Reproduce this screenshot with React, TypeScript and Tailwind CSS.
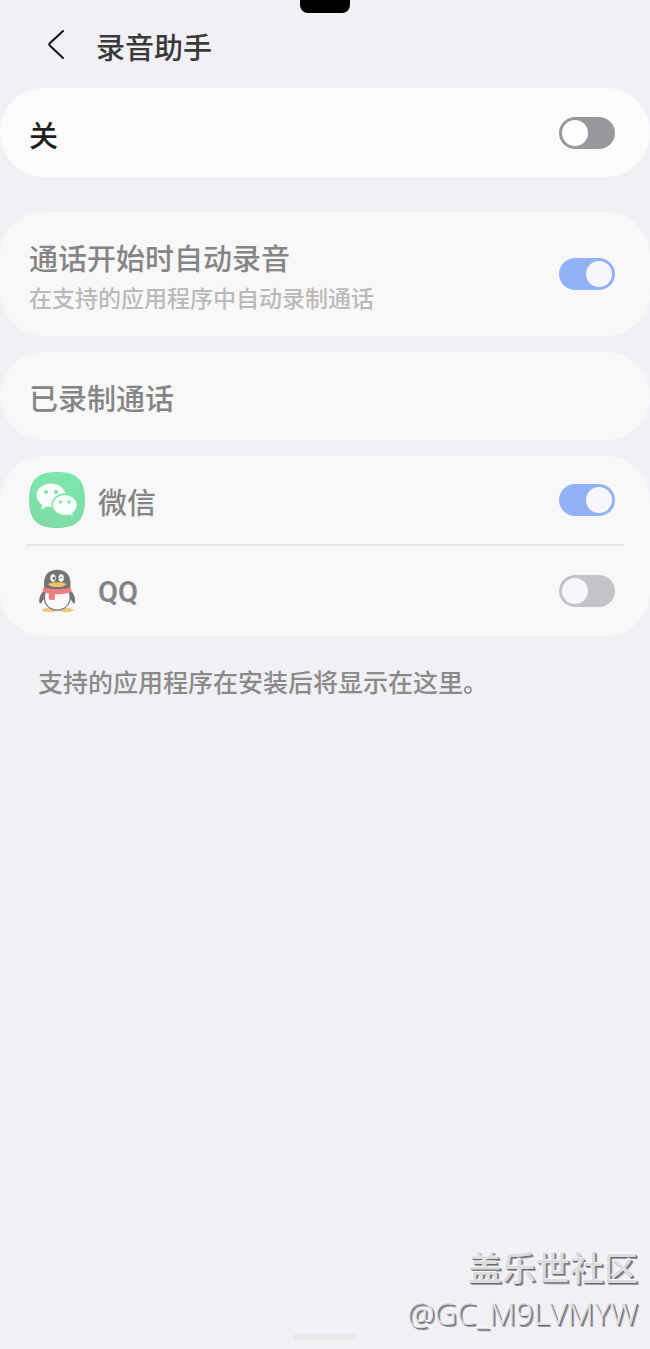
import React, { FC, ReactNode, useState } from 'react';

type SwitchProps = {
  id: string;
  checked: boolean;
  onChange: (value: boolean) => void;
  dimmed?: boolean;
};

const Switch: FC<SwitchProps> = ({ id, checked, onChange, dimmed }) => (
  <input
    id={id}
    type="checkbox"
    role="switch"
    checked={checked}
    onChange={(e) => onChange(e.target.checked)}
    className={`h-8 w-14 shrink-0 cursor-pointer appearance-none rounded-full p-[3px] before:block before:size-[26px] before:rounded-full before:content-[''] checked:bg-[#92b2f7] checked:before:ml-6 ${
      dimmed
        ? 'bg-[#c4c3c9] before:bg-[#f6f6fb]'
        : 'bg-[#98979c] before:bg-[#fdfdff]'
    }`}
  />
);

const Card: FC<{ children: ReactNode; className?: string }> = ({
  children,
  className = 'bg-[#f8f8f8]',
}) => <section className={`rounded-[44px] ${className}`}>{children}</section>;

const WeChatIcon = () => (
  <svg viewBox="0 0 56 56" className="size-14 shrink-0" aria-hidden="true">
    <defs>
      <linearGradient id="wechat-bg" x1="0" y1="0" x2="0" y2="1">
        <stop offset="0" stopColor="#7be8ac" />
        <stop offset="1" stopColor="#80dba6" />
      </linearGradient>
    </defs>
    <path
      d="M28 0C48 0 56 8 56 28S48 56 28 56 0 48 0 28 8 0 28 0Z"
      fill="url(#wechat-bg)"
    />
    <path
      d="M22 11.500c8 0 14.500 5.200 14.500 11.700S30 35 22 35c-1.500 0-3-.2-4.300-.5L12.700 37.500l.2-5C9.600 30.400 7.500 27 7.500 23.200c0-6.500 6.500-11.700 14.500-11.700Z"
      fill="#f8fdfa"
    />
    <path
      d="M35.800 22.300c7 0 12.600 4.800 12.600 10.700 0 3.300-1.700 6.200-4.500 8.200l.9 4.200-4.500-2.300c-1.400.5-2.900.7-4.500.7-7 0-12.600-4.800-12.600-10.800s5.600-10.700 12.600-10.700Z"
      fill="#f8fdfa"
      stroke="#7be2a9"
      strokeWidth="1.400"
    />
    <g fill="#7be2a9">
      <circle cx="17" cy="20" r="2" />
      <circle cx="27" cy="20" r="2" />
      <circle cx="31.500" cy="30" r="1.700" />
      <circle cx="40" cy="30" r="1.700" />
    </g>
  </svg>
);

const QQIcon = () => (
  <svg viewBox="0 0 56 56" className="size-14 shrink-0" aria-hidden="true">
    <ellipse cx="20" cy="47" rx="7.500" ry="2.200" fill="#ecca81" />
    <ellipse cx="37" cy="47" rx="7.500" ry="2.200" fill="#ecca81" />
    <g fill="#747474">
      <path d="M15.500 27C12 30 10 34 10.200 38.500c.2 2.500 1.300 2.500 2.300 1l4-6Z" />
      <path d="M41 27c3.500 3 5.300 7 5.100 11.500-.2 2.500-1.300 2.500-2.300 1l-4-6Z" />
      <ellipse cx="28.200" cy="34.500" rx="13.500" ry="13.200" />
      <path d="M15.500 28l-.5-7C15 11.500 20 6.800 28.200 6.800S41.500 11.500 41.500 21l-.5 7Z" />
    </g>
    <path
      d="M17.700 28h21c1.200 1.800 1.800 4 1.800 6.500 0 7-5 12-12.200 12S16 41.500 16 34.500c0-2.500.6-4.700 1.700-6.500Z"
      fill="#fafafa"
    />
    <path
      d="M14.500 24.500c8.500 2.300 19 2.300 27.300 0l.7 4.200c-5.300 2-10.800 2.700-16.700 2.500v5.600c-2 .4-4.200.2-6-.3v-6c-2.200-.4-4.300-1.100-6-2Z"
      fill="#ee7d80"
    />
    <ellipse cx="24" cy="15" rx="2.700" ry="3.700" fill="#fafafa" />
    <ellipse cx="32.200" cy="15" rx="2.700" ry="3.700" fill="#fafafa" />
    <ellipse cx="24.900" cy="15.200" rx="1.100" ry="1.700" fill="#666" />
    <path
      d="M30.700 15.600c.4-1.900 2.600-1.900 3.200 0"
      fill="none"
      stroke="#777"
      strokeWidth="1"
    />
    <path
      d="M19 21.200c3-2.600 15.400-2.600 18.400 0-3 3.800-15.400 3.800-18.400 0Z"
      fill="#edc36a"
    />
  </svg>
);

const App: FC = () => {
  const [enabled, setEnabled] = useState(false);
  const [autoRecord, setAutoRecord] = useState(true);
  const [wechat, setWechat] = useState(true);
  const [qq, setQQ] = useState(false);

  return (
    <div className="flex min-h-screen flex-col bg-[#f1f0f5] font-[Roboto,'Noto_Sans_CJK_SC',sans-serif] text-[29px] leading-10 font-medium text-[#858585]">
      <div className="mx-auto h-[13px] w-[50px] rounded-b-lg bg-black" />
      <header className="flex h-[75px] items-start gap-6 pt-3 pl-10 text-[#3a3a3a]">
        <button
          type="button"
          aria-label="返回"
          className="flex h-10 w-8 items-center justify-center"
        >
          <svg
            viewBox="0 0 32 40"
            className="h-10 w-8"
            fill="none"
            stroke="#111"
            strokeWidth="2"
            strokeLinecap="round"
            strokeLinejoin="round"
          >
            <path d="M23 6 9.800 18.300a1.500 1.500 0 0 0 0 2.200L23 33" />
          </svg>
        </button>
        <h1 className="pt-1">录音助手</h1>
      </header>

      <main>
        <Card className="mb-[35px] bg-[#fbfbfb]">
          <div className="flex h-[89px] items-center justify-between pr-[35px] pl-[29px]">
            <label htmlFor="enabled" className="pt-2 text-[#1f1f1f]">
              关
            </label>
            <Switch id="enabled" checked={enabled} onChange={setEnabled} />
          </div>
        </Card>

        <Card className="mb-4 bg-[#f8f8f8]">
          <div className="flex h-[124px] items-center justify-between pr-[35px] pl-[29px]">
            <label htmlFor="auto-record" className="pt-3">
              <span className="block">通话开始时自动录音</span>
              <span className="block text-[23px] text-[#bababa]">
                在支持的应用程序中自动录制通话
              </span>
            </label>
            <Switch
              id="auto-record"
              checked={autoRecord}
              onChange={setAutoRecord}
              dimmed
            />
          </div>
        </Card>

        <Card className="mb-4 bg-[#f8f8f8]">
          <button
            type="button"
            className="flex h-[88px] w-full items-center pt-2 pl-[29px] text-left"
          >
            已录制通话
          </button>
        </Card>

        <Card>
          <div className="flex h-[88px] items-center pr-[35px] pl-[29px]">
            <WeChatIcon />
            <label htmlFor="wechat" className="grow pt-2 pl-[13px]">
              微信
            </label>
            <Switch
              id="wechat"
              checked={wechat}
              onChange={setWechat}
              dimmed
            />
          </div>
          <hr className="mx-[26px] border-t-2 border-[#e9e9e9]" />
          <div className="flex h-[90px] items-center pr-[35px] pl-[29px]">
            <QQIcon />
            <label htmlFor="qq" className="grow pt-0.5 pl-[13px] font-semibold">
              QQ
            </label>
            <Switch id="qq" checked={qq} onChange={setQQ} dimmed />
          </div>
        </Card>

        <p className="px-[38px] pt-7 text-[25px] text-[#8a8a8a]">
          支持的应用程序在安装后将显示在这里。
        </p>
      </main>

      <footer className="mt-auto">
        <div className="pr-3 text-right text-[#dcdcdf] [text-shadow:-1px_-1px_0_#f8f8fa,1px_1px_0_#6c6c70,2px_2px_0_#9a9a9e]">
          <p className="text-[34px] leading-[46px]">盖乐世社区</p>
          <p className="font-['Open_Sans',sans-serif] text-[31px] leading-[42px] font-light">
            @GC_M9LVMYW
          </p>
        </div>
        <div className="mx-auto mb-[9px] h-[6px] w-16 rounded-full bg-[#e8e8e8]" />
      </footer>
    </div>
  );
};

export default App;
